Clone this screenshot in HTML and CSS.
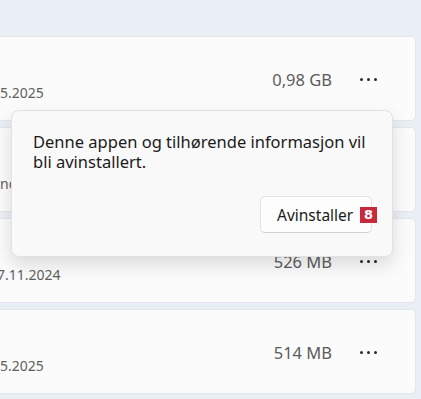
FILE: index.html
```html
<!DOCTYPE html>
<html>
<head>
    <title>Installerte apper</title>
    <link rel="stylesheet" href="styles.css">
</head>
<body>
    <div class="app-list">
        <div class="app-card">
            <div class="app-info"><span class="app-meta">5.2025</span></div>
            <span class="app-size">0,98 GB</span>
            <button class="more-btn" aria-label="Flere alternativer"><span></span><span></span><span></span></button>
        </div>
        <div class="app-card">
            <div class="app-info"><span class="app-meta">nc</span></div>
            <span class="app-size">1,12 GB</span>
            <button class="more-btn" aria-label="Flere alternativer"><span></span><span></span><span></span></button>
        </div>
        <div class="app-card">
            <div class="app-info"><span class="app-meta app-meta-cut">7.11.2024</span></div>
            <span class="app-size">526 MB</span>
            <button class="more-btn" aria-label="Flere alternativer"><span></span><span></span><span></span></button>
        </div>
        <div class="app-card">
            <div class="app-info"><span class="app-meta">5.2025</span></div>
            <span class="app-size">514 MB</span>
            <button class="more-btn" aria-label="Flere alternativer"><span></span><span></span><span></span></button>
        </div>
    </div>

    <div class="flyout">
        <p class="flyout-text">Denne appen og tilhørende informasjon vil bli avinstallert.</p>
        <div class="flyout-actions">
            <button class="uninstall-btn">Avinstaller<span class="step-badge">8</span></button>
        </div>
    </div>
</body>
</html>
```

FILE: styles.css
```css
body {
    margin: 0;
    background-color: #e9eff5;
    font-family: 'Noto Sans', 'Open Sans', sans-serif;
    overflow: hidden;
    position: relative;
    height: 399px;
}

.app-list {
    display: flex;
    flex-direction: column;
    gap: 6px;
    padding-top: 36px;
    margin-left: -20px;
    margin-right: 5px;
}

.app-card {
    display: flex;
    align-items: center;
    height: 85px;
    box-sizing: border-box;
    padding-left: 19px;
    background-color: #fbfbfc;
    border: 1px solid #e3e6ea;
    border-radius: 5px;
}

.app-info {
    flex: 1;
    padding-top: 26px;
}

.app-meta {
    font-size: 14px;
    line-height: 20px;
    color: #5f5f5f;
}

.app-meta-cut {
    margin-left: -3px;
}

.app-size {
    font-size: 16.5px;
    color: #5c5c5c;
    margin-right: 20px;
    margin-top: 1px;
}

.more-btn {
    display: flex;
    gap: 4px;
    align-items: center;
    justify-content: center;
    width: 32px;
    height: 32px;
    margin-right: 31px;
    padding: 0;
    border: none;
    background: none;
    margin-top: 1px;
}

.more-btn span {
    width: 3px;
    height: 3px;
    border-radius: 50%;
    background-color: #2b2b2b;
}

.flyout {
    position: absolute;
    left: 11px;
    top: 110px;
    width: 382px;
    height: 147px;
    box-sizing: border-box;
    padding: 21px 20px 0 21px;
    background-color: #f9f9f9;
    border: 1px solid #e2e2e2;
    border-radius: 8px;
    box-shadow: 0 8px 18px rgba(0, 0, 0, 0.13);
}

.flyout-text {
    margin: 0;
    max-width: 338px;
    font-size: 16.5px;
    line-height: 20px;
    color: #1b1b1b;
}

.flyout-actions {
    display: flex;
    justify-content: flex-end;
    margin-top: 24px;
}

.uninstall-btn {
    position: relative;
    width: 112px;
    height: 37px;
    padding: 0 0 0 16px;
    text-align: left;
    font-family: 'Noto Sans', 'Open Sans', sans-serif;
    font-size: 15.5px;
    color: #1b1b1b;
    background-color: #fdfdfd;
    border: 1px solid #e3e3e3;
    border-bottom-color: #d0d0d0;
    border-radius: 5px;
}

.step-badge {
    position: absolute;
    left: 99px;
    top: 10px;
    width: 17px;
    height: 16px;
    background-color: #c8283b;
    color: #fff;
    font-family: 'DejaVu Sans', sans-serif;
    font-weight: bold;
    font-size: 13px;
    line-height: 16px;
    text-align: center;
}
```
